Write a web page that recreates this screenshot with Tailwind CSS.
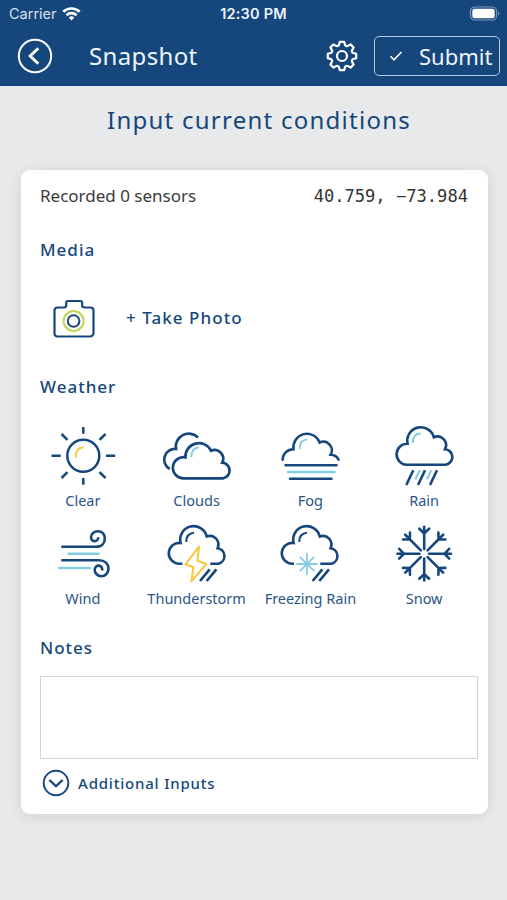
<!DOCTYPE html>
<html lang="en">
<head>
    <meta charset="UTF-8">
    <meta name="viewport" content="width=device-width, initial-scale=1.0">
    <title>Snapshot</title>
    <script src="https://cdn.jsdelivr.net/npm/@tailwindcss/browser@4"></script>
</head>
<body class="bg-[#e7e9eb] text-[#15477c] font-['Noto_Sans',sans-serif] h-[900px] overflow-hidden">

    <header class="bg-[#15477c] text-[#eef4fa] h-[86px]">
        <!-- Status bar -->
        <div class="h-7 grid grid-cols-3 items-center pl-[9px] pr-[7px] font-['Inter',sans-serif] text-[14.5px] leading-7">
            <div class="flex items-center gap-[5px] text-[#d5e0ec]">
                <span>Carrier</span>
                <svg class="w-[19px] h-[15px] -mt-0.5" viewBox="0 0 19 15" fill="none" stroke="#fff" stroke-width="2.6">
                    <path d="M1.3 5.8a11.7 11.7 0 0 1 16.4 0M4.4 9.2a7.3 7.3 0 0 1 10.2 0"/>
                    <path d="M9.5 14.4 6.8 11.5a3.9 3.9 0 0 1 5.4 0z" fill="#fff" stroke="none"/>
                </svg>
            </div>
            <div class="text-center font-semibold text-[14.5px] tracking-[0.2px] whitespace-nowrap pr-0.5">12:30 PM</div>
            <div class="flex justify-end">
                <svg class="w-[31px] h-[15px] -mt-0.5" viewBox="0 0 31 15">
                    <rect x="1.5" y="1" width="26" height="13" rx="4" fill="none" stroke="#7c9aba" stroke-width="1.2"/>
                    <rect x="3.3" y="2.8" width="22.4" height="9.4" rx="2.2" fill="#fff"/>
                    <path d="M29 5.5v4c1.8-.6 1.8-3.4 0-4z" fill="#7c9aba"/>
                </svg>
            </div>
        </div>
        <!-- Nav bar -->
        <div class="flex items-center h-14 pl-[17px] pr-[7px]">
            <svg class="w-9 h-9" viewBox="0 0 36 36" fill="none" stroke="#fff">
                <circle cx="18" cy="18" r="16.2" stroke-width="2"/>
                <path d="M21.3 10.2 13.1 18l8.2 7.8" stroke-width="2.8"/>
            </svg>
            <h1 class="ml-[36px] text-[24px] tracking-[0.35px] w-[237px]">Snapshot</h1>
            <svg class="w-8 h-8" viewBox="-16 -16 32 32" fill="none" stroke="#fff" stroke-width="2.2" stroke-linejoin="round">
                <path d="M-3-11.3-2.2-14.2H2.2L3-11.3A2 2 0 0 0 5.9-10.1L8.5-11.6 11.6-8.5 10.1-5.9A2 2 0 0 0 11.3-3L14.2-2.2V2.2L11.3 3A2 2 0 0 0 10.1 5.9L11.6 8.5 8.5 11.6 5.9 10.1A2 2 0 0 0 3 11.3L2.2 14.2H-2.2L-3 11.3A2 2 0 0 0-5.9 10.1L-8.5 11.6-11.6 8.5-10.1 5.9A2 2 0 0 0-11.3 3L-14.2 2.2V-2.2L-11.3-3A2 2 0 0 0-10.1-5.9L-11.6-8.5-8.5-11.6-5.9-10.1A2 2 0 0 0-3-11.3z"/>
                <circle r="5"/>
            </svg>
            <button class="ml-auto flex items-center w-[126px] h-10 border border-[#b9cade] rounded-[5px] pl-[14px] text-[22px]">
                <svg class="w-[14px] h-[12px]" viewBox="0 0 14 12" fill="none" stroke="#fff" stroke-width="1.6">
                    <path d="M1.5 6.3 5 9.8 12.5 2"/>
                </svg>
                <span class="ml-[16px]">Submit</span>
            </button>
        </div>
    </header>

    <h2 class="h-[84px] pt-[16px] pl-[11px] text-center text-[24px] leading-9 tracking-[1.25px]">Input current conditions</h2>

    <main class="ml-[20.5px] w-[467px] h-[644px] bg-white rounded-[9px] shadow-[0_2px_14px_rgba(0,0,0,0.1)]">
        <div class="flex justify-between items-center px-[19.5px] h-[52px] text-[#3b3b3b]">
            <span class="text-[17px]">Recorded 0 sensors</span>
            <span class="pt-0.5 font-['DejaVu_Sans_Mono',monospace] text-[17.1px] text-[#333]">40.759, −73.984</span>
        </div>
        <h3 class="px-[19.5px] h-14 leading-14 text-[17px] font-medium tracking-[1px]">Media</h3>

        <div class="flex items-center h-[82px] pl-[32px]">
            <svg class="w-[42px] h-10" viewBox="0 0 42 40" fill="none" stroke="#15477c" stroke-width="2.2" stroke-linejoin="round">
                <path d="M4.5 8.5H11l2.2-1V4a2 2 0 0 1 2-2h12a2 2 0 0 1 2 2v3.5l2.2 1h6.1a3 3 0 0 1 3 3V34a3.5 3.5 0 0 1-3.5 3.5H4.5A3 3 0 0 1 1.5 34V11.5a3 3 0 0 1 3-3z"/>
                <circle cx="20.6" cy="22" r="10" stroke="#c3d552" stroke-width="2"/>
                <circle cx="20.6" cy="22" r="5.8" stroke-width="2"/>
            </svg>
            <span class="ml-[31.5px] -mt-0.5 text-[17px] font-medium tracking-[1.05px]">+ Take Photo</span>
        </div>

        <h3 class="px-[19.5px] h-[55px] leading-[53px] text-[17px] font-medium tracking-[1px]">Weather</h3>

        <div class="ml-[5.5px] w-[455px] grid grid-cols-4 auto-rows-[98px] pt-[6px] text-[14.5px] leading-[18px] text-[#2a5587] whitespace-nowrap">
            <!-- Clear -->
            <div class="flex flex-col items-center">
                <svg class="w-20 h-[70px] shrink-0" viewBox="0 0 80 70" fill="none" stroke="#15477c" stroke-width="2.5">
                    <circle cx="40.3" cy="34.7" r="16"/>
                    <path d="M40.3 6v6.7M40.3 57v6.7M8.5 34.7h9.2M63 34.7h9.2M18.5 13l6 5.8M62.5 13l-6 5.8M18.5 57l6-5.8M62.5 57l-6-5.8"/>
                    <path d="M32.7 36.5q-.4-9.5 7.9-10.2" stroke="#fac83e" stroke-width="2"/>
                </svg>
                <span>Clear</span>
            </div>
            <!-- Clouds -->
            <div class="flex flex-col items-center">
                <svg class="w-20 h-[70px] shrink-0" viewBox="0 0 80 70" fill="none" stroke="#15477c" stroke-width="2.7">
                    <path d="M41 16.5A13 13 0 0 0 19 28A10.7 10.7 0 0 0 12.7 48"/>
                    <path d="M27.2 57.3A10.6 10.6 0 1 1 28.4 36.3A13.5 13.5 0 0 1 54 29.7A8.8 8.8 0 0 1 65.3 41.7A7.9 7.9 0 0 1 66.3 57.3z"/>
                    <path d="M34.4 36q-.3-9 7.6-9.8" stroke="#84cde0" stroke-width="2"/>
                </svg>
                <span>Clouds</span>
            </div>
            <!-- Fog -->
            <div class="flex flex-col items-center">
                <svg class="w-20 h-[70px] shrink-0" viewBox="0 0 80 70" fill="none" stroke="#15477c" stroke-width="2.5" stroke-linecap="round">
                    <path d="M12.6 38.7A10.7 10.7 0 0 1 23.6 28.2A13.5 13.5 0 0 1 49.6 21.5A8.6 8.6 0 0 1 60.6 33.7Q66.5 34 68.6 38.7"/>
                    <path d="M15.5 44.3h51M20 57.7h41.5"/>
                    <path d="M18 51h46.5" stroke="#84cde0"/>
                    <path d="M29.7 28q-.3-9 7.5-9.7" stroke="#84cde0" stroke-width="1.8" stroke-linecap="butt"/>
                </svg>
                <span>Fog</span>
            </div>
            <!-- Rain -->
            <div class="flex flex-col items-center">
                <svg class="w-20 h-[70px] shrink-0" viewBox="0 0 80 70" fill="none" stroke="#15477c" stroke-width="2.6">
                    <path d="M22.6 43.7A10.5 10.5 0 1 1 23.6 22.7A13.5 13.5 0 0 1 49.8 16.2A8.7 8.7 0 0 1 61 28.2A7.8 7.8 0 0 1 61.7 43.7z"/>
                    <path d="M29.3 49.3l-7 14.7M41 49.3 34 64M53 49.3 46 64"/>
                    <path d="M35.7 49.3l-4.3 9M47.3 49.3l-4.3 9" stroke="#84cde0" stroke-width="2"/>
                    <path d="M28.7 22q-.3-9 8-9.5" stroke="#84cde0" stroke-width="2"/>
                </svg>
                <span>Rain</span>
            </div>
            <!-- Wind -->
            <div class="flex flex-col items-center">
                <svg class="w-20 h-[70px] shrink-0" viewBox="0 0 80 70" fill="none" stroke="#15477c" stroke-width="2.6">
                    <path d="M18.3 27.8H53C59 27.8 61.8 24 61.8 19.5C61.8 15 59 12.2 55 12.2C51 12.2 48 15 48 18.3C48 23.5 55.5 23.2 55.3 18.3"/>
                    <path d="M18.3 41.2H56C62 41.2 65.5 45 65.5 49.5C65.5 54.5 62 57.2 58.3 57.2C54.5 57.2 51.7 54.2 51.7 51C51.7 44.8 60 45.3 59.2 51.5"/>
                    <path d="M24.7 34.7h32M15.3 49h32.5" stroke="#84cde0"/>
                </svg>
                <span>Wind</span>
            </div>
            <!-- Thunderstorm -->
            <div class="flex flex-col items-center">
                <svg class="w-20 h-[70px] shrink-0" viewBox="0 0 80 70" fill="none" stroke="#15477c" stroke-width="2.6">
                    <path d="M25.4 44.7H22.3A10.4 10.4 0 1 1 23.6 24A13.5 13.5 0 0 1 49.8 17.4A8.7 8.7 0 0 1 60.6 29.2A7.9 7.9 0 0 1 61.4 44.7H53.3"/>
                    <path d="M29.3 23q-.3-8.6 7.7-9.3" stroke-width="2"/>
                    <path d="M42 27.7 28.4 45.3 36.4 48.3 34.4 62.3 49.4 45 40.4 41.7z" stroke="#fac83e" stroke-width="2" stroke-linejoin="round"/>
                    <path d="M52.7 50.3 43 62M59.4 50.3 49.7 62"/>
                </svg>
                <span>Thunderstorm</span>
            </div>
            <!-- Freezing rain -->
            <div class="flex flex-col items-center">
                <svg class="w-20 h-[70px] shrink-0" viewBox="0 0 80 70" fill="none" stroke="#15477c" stroke-width="2.6">
                    <path d="M24 44.7H22.3A10.4 10.4 0 1 1 23.6 24A13.5 13.5 0 0 1 49.8 17.4A8.7 8.7 0 0 1 60.6 29.2A7.9 7.9 0 0 1 61.4 44.7H50.3"/>
                    <path d="M29.3 23q-.3-8.6 7.7-9.3" stroke-width="2"/>
                    <path d="M37 34.3V55.7M26.3 45H47.7M29.8 37.8 44.2 52.2M44.2 37.8 29.8 52.2" stroke="#84cde0" stroke-width="1.8"/>
                    <path d="M52.3 50.3 42.6 62M59 50.3 49.3 62"/>
                </svg>
                <span>Freezing Rain</span>
            </div>
            <!-- Snow -->
            <div class="flex flex-col items-center">
                <svg class="w-20 h-[70px] shrink-0" viewBox="-40.2 -34.7 80 70" fill="none" stroke="#15477c" stroke-width="2.6" stroke-linecap="round">
                    <defs>
                        <path id="arm" d="M0-4.8V-26.8M-4.9-25 0-20.3 4.9-25"/>
                    </defs>
                    <use href="#arm"/>
                    <use href="#arm" transform="rotate(45)"/>
                    <use href="#arm" transform="rotate(90)"/>
                    <use href="#arm" transform="rotate(135)"/>
                    <use href="#arm" transform="rotate(180)"/>
                    <use href="#arm" transform="rotate(225)"/>
                    <use href="#arm" transform="rotate(270)"/>
                    <use href="#arm" transform="rotate(315)"/>
                </svg>
                <span>Snow</span>
            </div>
        </div>

        <h3 class="px-[19.5px] h-[59px] leading-[61px] text-[17px] font-medium tracking-[1px]">Notes</h3>
        <textarea class="block ml-[19.5px] w-[438px] h-[83px] border border-[#d3d5d7] resize-none"></textarea>
        <div class="flex items-center h-[48px] pl-[21.5px]">
            <svg class="w-7 h-7" viewBox="0 0 28 28" fill="none" stroke="#15477c">
                <circle cx="14" cy="14" r="12.3" stroke-width="1.9"/>
                <path d="M7.3 11 14 17.2 20.7 11" stroke-width="2.3"/>
            </svg>
            <span class="ml-[8px] text-[15px] font-medium tracking-[0.8px]">Additional Inputs</span>
        </div>
    </main>

</body>
</html>
